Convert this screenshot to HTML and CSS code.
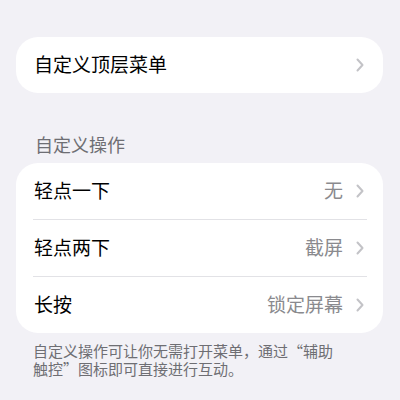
FILE: index.html
```html
<!DOCTYPE html>
<html lang="zh-CN">
<head>
<meta charset="utf-8">
<link rel="stylesheet" href="styles.css">
</head>
<body>
<div class="page">
  <div class="card single">
    <div class="row">
      <span class="label">自定义顶层菜单</span>
      <span class="right"><svg class="chev" viewBox="0 0 8 14"><path d="M1.5 1.5 L6.5 7 L1.5 12.5"/></svg></span>
    </div>
  </div>

  <div class="section-title">自定义操作</div>
  <div class="card">
    <div class="row">
      <span class="label">轻点一下</span>
      <span class="right"><span class="value">无</span><svg class="chev" viewBox="0 0 8 14"><path d="M1.5 1.5 L6.5 7 L1.5 12.5"/></svg></span>
    </div>
    <div class="sep"></div>
    <div class="row">
      <span class="label">轻点两下</span>
      <span class="right"><span class="value">截屏</span><svg class="chev" viewBox="0 0 8 14"><path d="M1.5 1.5 L6.5 7 L1.5 12.5"/></svg></span>
    </div>
    <div class="sep"></div>
    <div class="row">
      <span class="label">长按</span>
      <span class="right"><span class="value">锁定屏幕</span><svg class="chev" viewBox="0 0 8 14"><path d="M1.5 1.5 L6.5 7 L1.5 12.5"/></svg></span>
    </div>
  </div>
  <div class="footer">自定义操作可让你无需打开菜单，通过“辅助触控”图标即可直接进行互动。</div>
</div>
</body>
</html>
```

FILE: styles.css
```css
html, body {
  margin: 0;
  padding: 0;
  background: #f2f1f6;
}
body {
  font-family: "Noto Sans CJK SC", "Noto Sans", sans-serif;
  color: #000;
}
.page {
  padding: 37px 17px 0 16px;
  display: flex;
  flex-direction: column;
}
.card {
  background: #fff;
  border-radius: 22px;
  display: flex;
  flex-direction: column;
}
.row {
  height: 56px;
  box-sizing: border-box;
  display: flex;
  align-items: center;
  justify-content: space-between;
  padding: 0 19px 4px 18px;
  font-size: 19px;
}
.label {
  line-height: 1;
}
.right {
  display: flex;
  align-items: center;
  gap: 13px;
}
.value {
  color: #8a8a8e;
  line-height: 1;
}
.chev {
  width: 8px;
  height: 14px;
  margin-top: 3px;
  fill: none;
  stroke: #c3c3c7;
  stroke-width: 2;
  stroke-linecap: round;
  stroke-linejoin: round;
}
.sep {
  height: 1px;
  background: #e2e2e6;
  margin: 0 16px 0 17px;
}
.section-title {
  color: #6e6e73;
  font-size: 18px;
  line-height: 18px;
  padding: 0 0 0 19px;
  margin: 42px 0 10px;
}
.footer {
  color: #6e6e73;
  font-size: 15px;
  line-height: 18px;
  padding: 0 40px 0 17px;
  margin-top: 9px;
}
```
